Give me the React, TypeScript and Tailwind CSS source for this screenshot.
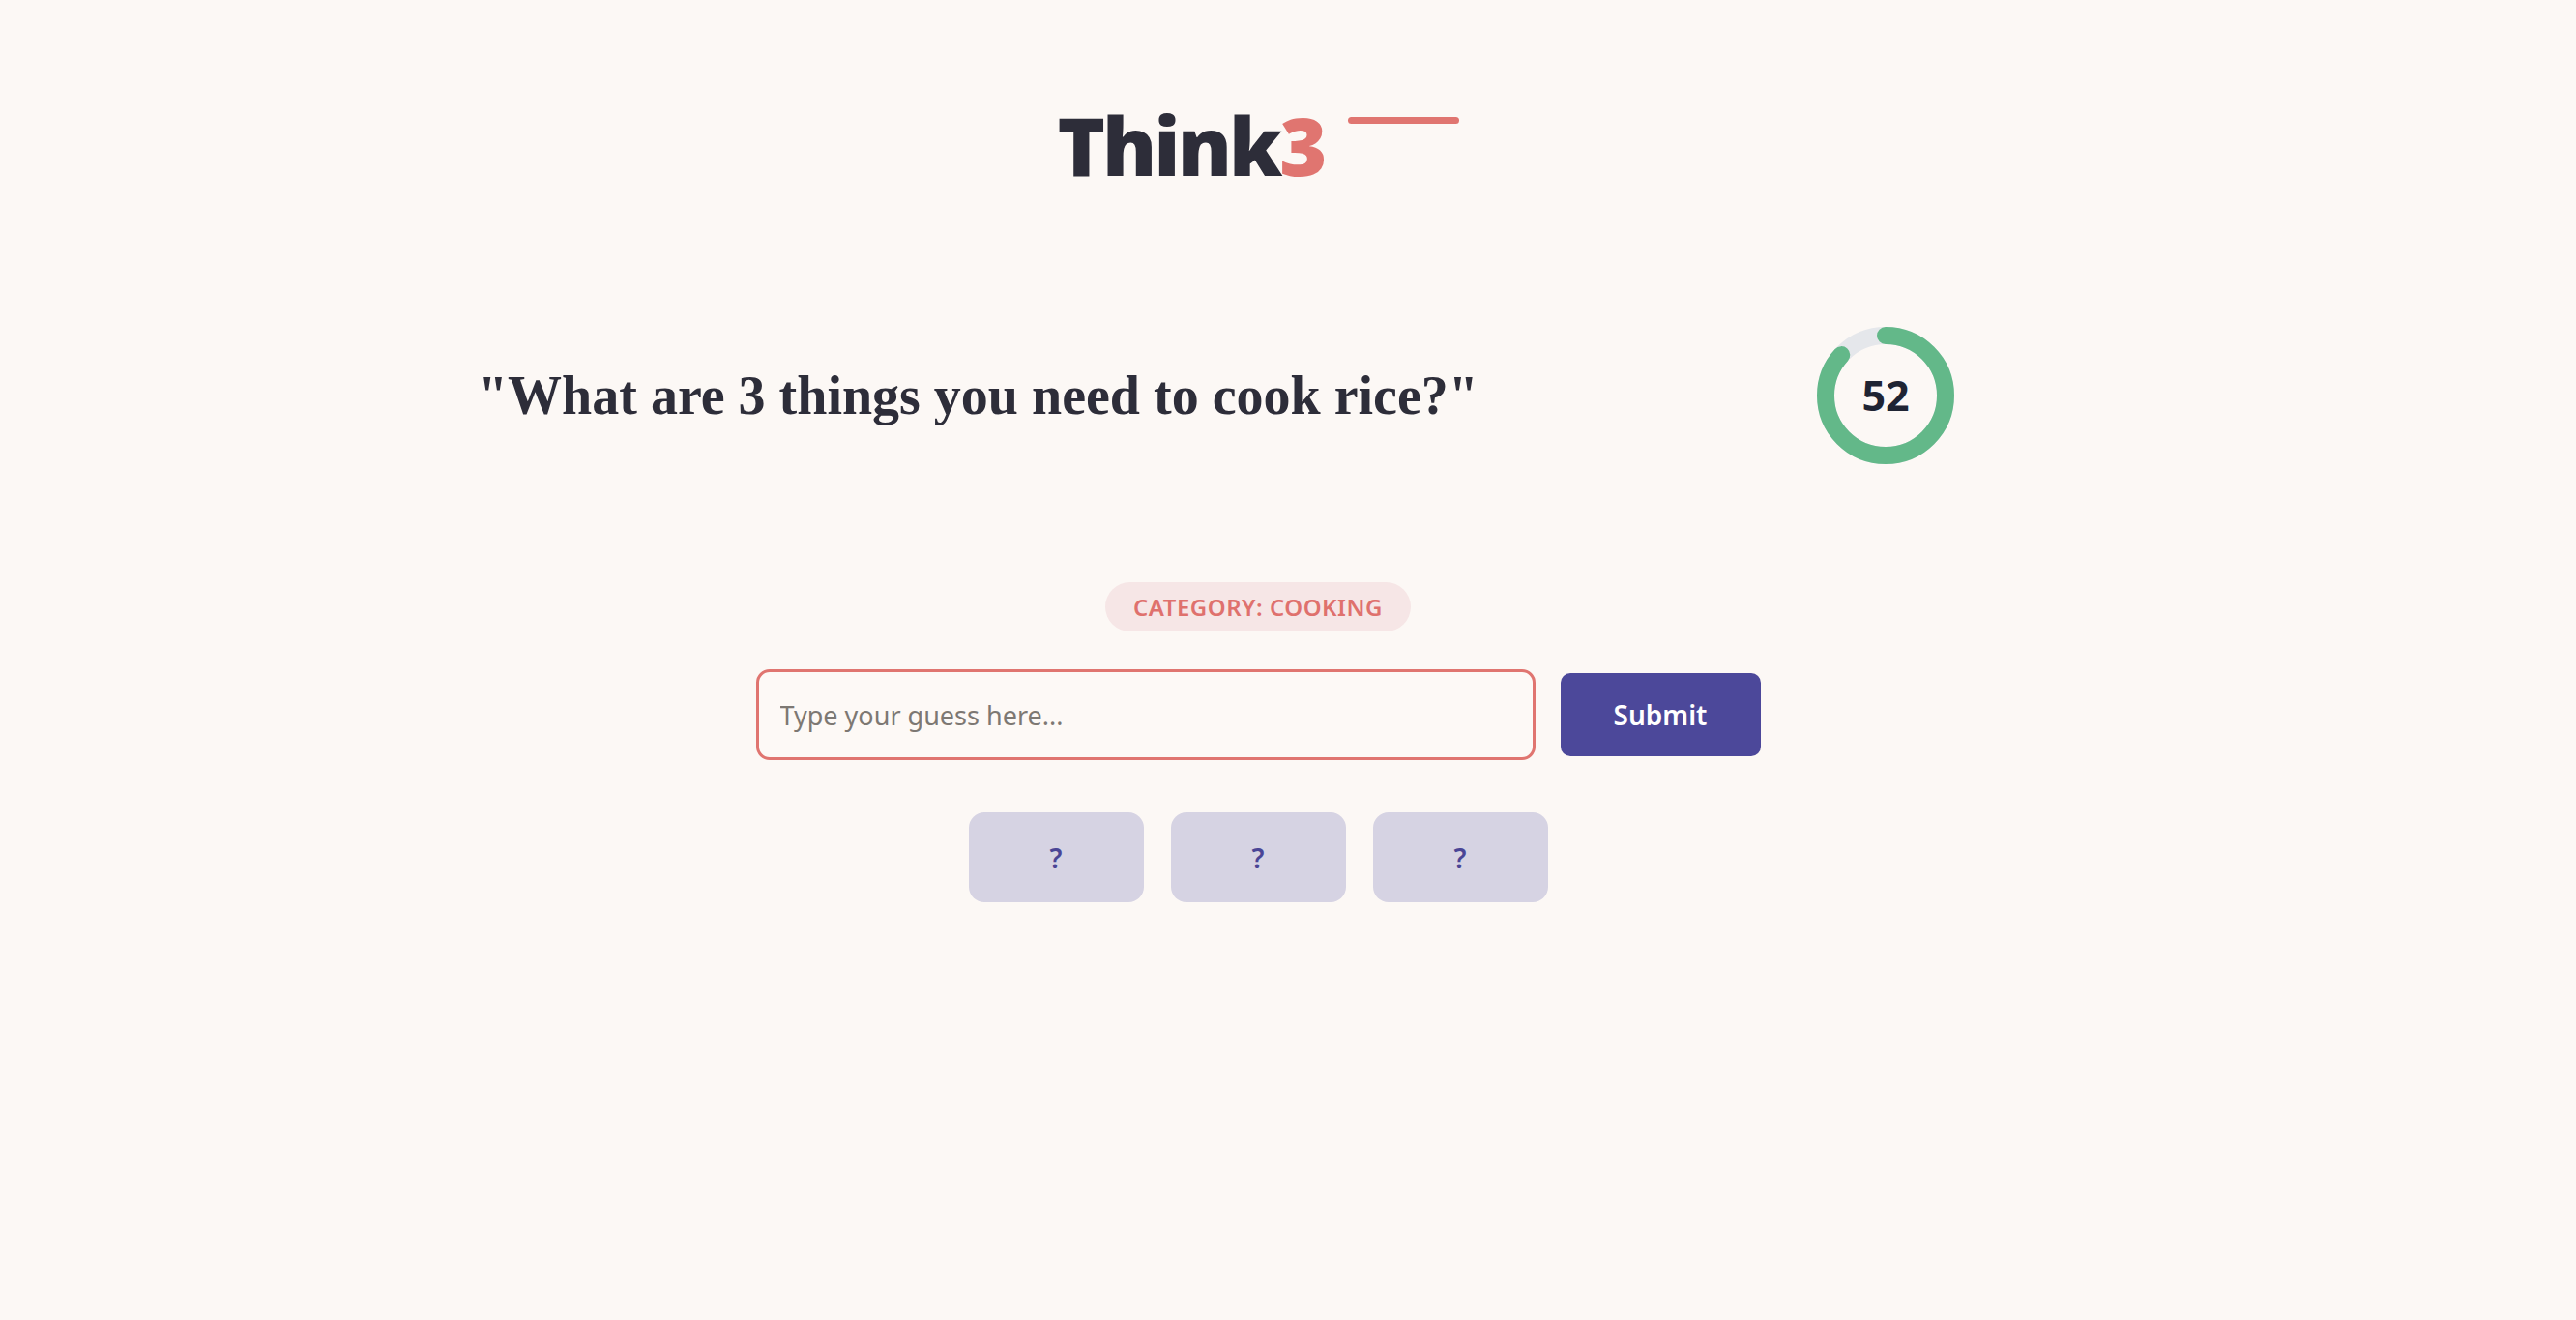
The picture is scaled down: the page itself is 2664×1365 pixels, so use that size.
import React from "react";

function Timer({ value, total }: { value: number; total: number }) {
  const r = 62;
  const c = 2 * Math.PI * r;
  const frac = value / total;
  return (
    <div className="relative w-[142px] h-[142px] shrink-0">
      <svg width="142" height="142" viewBox="0 0 142 142" className="-rotate-90">
        <circle cx="71" cy="71" r={r} fill="none" stroke="#e5e7eb" strokeWidth="18" />
        <circle
          cx="71"
          cy="71"
          r={r}
          fill="none"
          stroke="#63b889"
          strokeWidth="18"
          strokeLinecap="round"
          strokeDasharray={`${c * frac} ${c}`}
        />
      </svg>
      <div className="absolute inset-0 flex items-center justify-center font-['Noto_Sans',sans-serif] font-bold text-[43px] text-[#1f2433]">
        {value}
      </div>
    </div>
  );
}

export default function App() {
  return (
    <div className="min-h-screen w-full bg-[#fcf8f5] font-['Noto_Sans',sans-serif]">
      <div className="pr-[62px] flex flex-col items-center">
        <div className="pt-[108px] flex items-start gap-[24px]">
          <div className="leading-none font-['Open_Sans',sans-serif] font-extrabold text-[84px] tracking-[-3px] text-[#2d2d39]">
            Think<span className="text-[#e07570]">3</span>
          </div>
          <div className="mt-[13px] w-[115px] h-[7px] rounded-full bg-[#e07570]" />
        </div>
      </div>

      <div className="mt-[146px] ml-[494px] w-[1527px] flex items-center justify-between">
        <h1 className="font-['Liberation_Serif',serif] font-bold text-[56px] leading-none text-[#2d2d39]">
          "What are 3 things you need to cook rice?"
        </h1>
        <Timer value={52} total={60} />
      </div>

      <div className="pr-[62px] flex flex-col items-center">
        <div className="mt-[122px] h-[51px] px-[29px] rounded-full bg-[#f6e6e6] flex items-center text-[#df716d] text-[24px] font-semibold tracking-[0.5px]">
          CATEGORY: COOKING
        </div>

        <div className="mt-[39px] flex items-center gap-[26px]">
          <input
            autoFocus
            placeholder="Type your guess here..."
            className="w-[806px] h-[94px] rounded-[14px] border-[3px] border-[#e07570] bg-[#fdf9f6] px-[22px] text-[27px] text-[#2d2d39] placeholder:text-[#7d7873] outline-none"
          />
          <button className="w-[207px] h-[86px] rounded-[10px] bg-[#4c489a] text-white text-[28px] font-semibold">
            Submit
          </button>
        </div>

        <div className="mt-[54px] flex gap-[28px]">
          {[0, 1, 2].map((i) => (
            <div
              key={i}
              className="w-[181px] h-[93px] rounded-[16px] bg-[#d6d3e3] flex items-center justify-center text-[#4a4596] text-[28px] font-semibold"
            >
              ?
            </div>
          ))}
        </div>
      </div>
    </div>
  );
}
